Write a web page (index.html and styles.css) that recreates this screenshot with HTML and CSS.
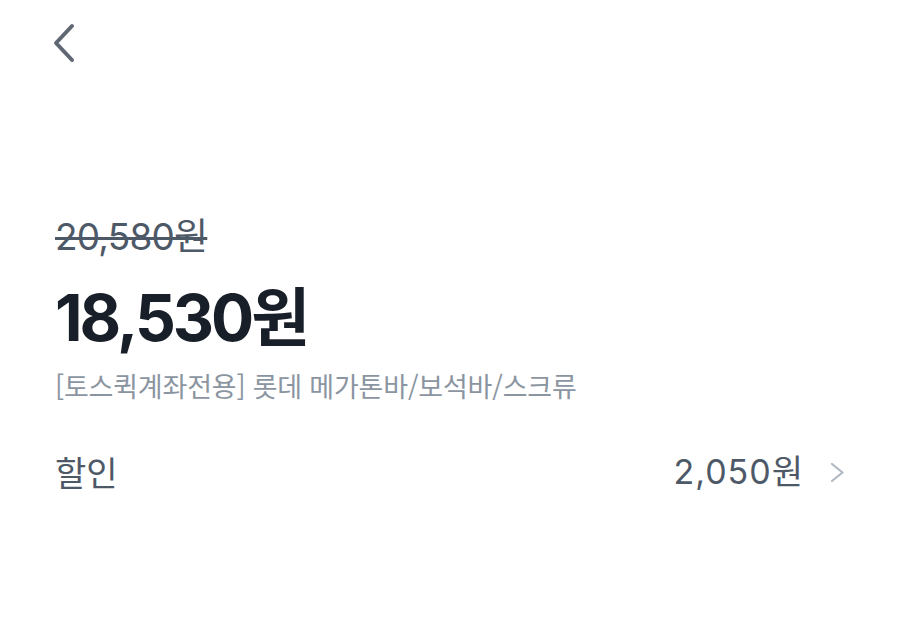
FILE: index.html
```html
<!DOCTYPE html>
<html lang="ko">
<head>
  <meta charset="UTF-8">
  <title>상품 가격</title>
  <meta name="viewport" content="width=device-width, initial-scale=1.0">
  <link rel="stylesheet" href="styles.css">
</head>
<body>

<header class="top-bar">
  <button class="back-btn" aria-label="뒤로">
    <svg width="28" height="42" viewBox="0 0 28 42" fill="none">
      <path d="M22 4 L6 21 L22 38" stroke="#5f6773" stroke-width="4" stroke-linecap="round" stroke-linejoin="round"/>
    </svg>
  </button>
</header>

<main class="product">
  <p class="old-price">20,580원</p>
  <p class="price">18,530원</p>
  <p class="name">[토스퀵계좌전용] 롯데 메가톤바/보석바/스크류</p>

  <div class="row">
    <span class="row-label">할인</span>
    <span class="row-value">
      2,050원
      <svg width="15" height="21" viewBox="0 0 15 21" fill="none">
        <path d="M2 2 L12.5 10.5 L2 19" stroke="#b0b8c1" stroke-width="2.2" stroke-linecap="round" stroke-linejoin="round"/>
      </svg>
    </span>
  </div>
</main>

</body>
</html>
```

FILE: styles.css
```css
body {
  margin: 0;
  padding: 0;
  background: #ffffff;
  font-family: "Noto Sans CJK KR", "Noto Sans", sans-serif;
  color: #191f28;
}

.top-bar {
  padding: 22px 0 0 50px;
  height: 60px;
}

.back-btn {
  background: none;
  border: none;
  padding: 0;
  cursor: pointer;
}

.product {
  padding: 135px 55px 0 55px;
}

.product p {
  margin: 0;
}

.old-price {
  font-family: Inter, "Noto Sans CJK KR", sans-serif;
  font-size: 37px;
  line-height: 40px;
  color: #4e5968;
  text-decoration: line-through;
  text-decoration-thickness: 3px;
  letter-spacing: -0.8px;
}

.product .price {
  margin-top: 26px;
  font-family: Inter, "Noto Sans CJK KR", sans-serif;
  font-size: 64px;
  line-height: 70px;
  font-weight: 700;
  letter-spacing: -3px;
}

.product .name {
  margin-top: 16px;
  font-size: 27px;
  line-height: 34px;
  color: #8b95a1;
  letter-spacing: -0.2px;
}

.row {
  display: flex;
  justify-content: space-between;
  align-items: center;
  margin-top: 47px;
  line-height: 44px;
}

.row-label {
  font-size: 34px;
  color: #4e5968;
}

.row-value {
  display: flex;
  align-items: center;
  gap: 26px;
  font-family: Inter, "Noto Sans CJK KR", sans-serif;
  font-size: 34px;
  color: #4e5968;
  letter-spacing: 1px;
}
```
